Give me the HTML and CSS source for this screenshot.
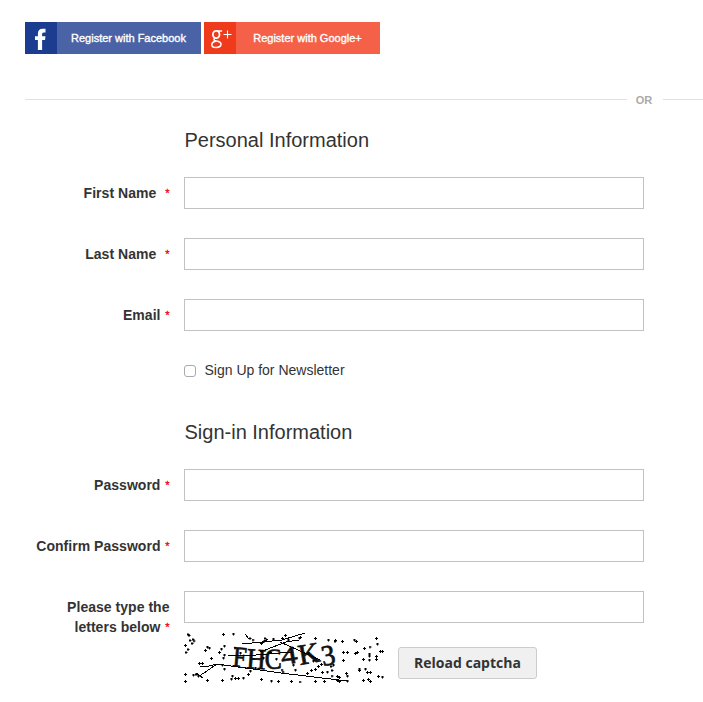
FILE: index.html
```html
<!DOCTYPE html>
<html lang="en">
<head>
<meta charset="utf-8">
<title>Create an Account</title>
<link rel="stylesheet" href="styles.css">
</head>
<body>
<main class="page">
  <div class="social">
    <a class="social-btn facebook">
      <span class="social-icon"><svg width="32" height="32" viewBox="0 0 32 32"><path d="M12.9 28V18.1H10V14.2h2.9v-2.4c0-3.5 1.7-5.1 4.7-5.1H20.5v3.7h-1.7c-1.4 0-1.7.7-1.7 1.9v1.9h3.4l-.5 3.9h-2.9V28z" fill="#fff"/></svg></span>
      <span class="social-label">Register with Facebook</span>
    </a>
    <a class="social-btn google">
      <span class="social-icon"><svg width="32" height="32" viewBox="0 0 32 32" fill="none" stroke="#fff"><ellipse cx="12.2" cy="12.5" rx="3.3" ry="3.7" stroke-width="1.8"/><path d="M13 8.9h5.1M11 16.2c-1.9 1.2-1.3 2.3 1.3 2.8 3.3.6 5.2 1.7 4.7 3.8-.5 1.900-2.4 2.7-4.9 2.7-2.7 0-4.3-1-4.3-2.8 0-1.900 1.7-3 3.8-3.4" stroke-width="1.5"/><path d="M19.5 12.500h8M23.500 8.500v8" stroke-width="1.1"/></svg></span>
      <span class="social-label">Register with Google+</span>
    </a>
  </div>
  <div class="divider"><span>OR</span></div>

  <form class="form">
    <h2>Personal Information</h2>
    <div class="row"><label class="wide" for="first">First Name <em>*</em></label><input class="field" id="first" type="text"></div>
    <div class="row"><label class="wide" for="last">Last Name <em>*</em></label><input class="field" id="last" type="text"></div>
    <div class="row"><label for="email">Email <em>*</em></label><input class="field" id="email" type="text"></div>
    <div class="check"><input id="news" type="checkbox"><label for="news">Sign Up for Newsletter</label></div>

    <h2>Sign-in Information</h2>
    <div class="row"><label for="pass">Password <em>*</em></label><input class="field" id="pass" type="password"></div>
    <div class="row"><label for="confirm">Confirm Password <em>*</em></label><input class="field" id="confirm" type="password"></div>
    <div class="row last">
      <label for="letters">Please type the<br>letters below <em>*</em></label>
      <div class="captcha-cell">
        <input class="field" id="letters" type="text">
        <div class="captcha">
          <svg width="200" height="50" viewBox="0 0 200 50">
            <defs><marker id="speck" markerUnits="userSpaceOnUse" markerWidth="4" markerHeight="4" refX="1.5" refY="1.5"><path d="M0 1h3v1H0zM1 0h1v3H1z"/></marker></defs>
            <g class="glyphs">
              <text transform="translate(48 33) rotate(5) scale(.86 1)">F</text>
              <text transform="translate(62 35) rotate(4) scale(.92 1)">H</text>
              <text transform="translate(81 36) rotate(-2) scale(.88 1)">C</text>
              <text transform="translate(98 32) rotate(-9) scale(1.15 .86)">4</text>
              <text transform="translate(116 32) rotate(-10) scale(1.02 1)">K</text>
              <text transform="translate(139 33) rotate(-10) scale(.95 1)">3</text>
            </g>
            <path class="scratch" d="M16 33h9l8-2 64 9 66 8M33 31 20 40l-5 3M12 40l7 5M58 11l40-4 23-7M44 22l16 1 48-4M76 19l26-10 13-2M96 9l18 8 22 10M61 1l4 5M78 10l6-4"/>
            <g class="specks">
              <polyline points="4,1.5 5,2.5 6,7.5 9,6.5 10,8 8,10.5 1.5,12.5 4,16.5 2,19.5 21.5,17.5 23.5,14 25.5,15 27.5,25.5 39.5,1.5 49.5,1 40.5,13 37.5,16 35.5,19.5 40.5,22 39.5,25 38.5,32 40.5,36 15.5,30.5 18.5,30.5 1.5,41.5 9.5,42 12,41.5 14.5,43 23.5,47.5 1.5,48.5 38.5,47.5 47.5,46 51.5,45.5 54.5,45.5 59.5,45 64.5,41.5 48.5,43"/>
              <polyline points="66,5.5 69,7 80.5,8 81,5.5 89.5,6 98.5,5.5 77.5,10.5 77.5,46.5 87.5,48 94.5,48.5 86.5,19.5 101.5,2.5 116.5,4.5 131.5,5.5 151.5,7.5 158.5,8.5 170.5,7 172.5,8.5 192.5,5.5 193.5,11 186,14 180.5,15.5 159.5,19.5 163.5,19.5 171.5,20.5 173.5,19.5 185.5,21 185.5,23 179.5,26.5 185.5,27 192.5,23.5 192.5,26.5 196.5,18.5 198.5,18.5"/>
              <polyline points="159.5,27.5 134.5,33.5 137.5,31.5 138.5,39.5 143.5,39 148,37.5 147,33.5 131.5,36.5 175.5,36 175.5,37.5 181.5,36 183.5,39.5 186.5,39.5 194.5,43.5 198.5,44 162.5,40.5 163.5,43 148,43 153.5,43.5 155.5,44.5 153.5,47.5 155.5,48.5 163.5,48 179.5,47.5 184.5,46.5 186.5,48.5 107.5,48.5 116,49 131.5,48.5 140.5,48.5 123.5,40.5 127.5,37.5"/>
              <polyline points="79.5,25 92.5,26 104.5,7 115.5,5 144.5,7 151,8.5 124.5,20 129.5,28 109.5,32 71.5,35 149.5,32 66.5,38 56.5,20 51,15 98,37 99,39 111.5,37"/>
            </g>
          </svg>
          <button type="button">Reload captcha</button>
        </div>
      </div>
    </div>
  </form>
</main>
</body>
</html>
```
FILE: styles.css
```css
* { box-sizing: border-box; }
body { margin: 0; background: #fff; color: #333; font: 14px/20px "Liberation Sans", Arial, sans-serif; overflow: hidden; }
.page { padding: 22px 0 0 25px; }
.social { display: flex; gap: 3px; }
.social-btn { display: flex; width: 176px; height: 32px; color: #fff; font-size: 11px; line-height: 32px; }
.social-icon { width: 32px; height: 32px; }
.social-icon svg, .captcha svg { display: block; }
.social-label { flex: 1; padding-right: 1px; text-align: center; -webkit-text-stroke: .35px #fff; white-space: nowrap; }
.facebook { background: #4a62a6; }
.facebook .social-icon { background: #1c3c8f; }
.google { background: #f56148; }
.google .social-icon { background: #f03a1c; }
.divider { display: flex; align-items: center; gap: 10px; height: 20px; margin-top: 36px; color: #aaa; font-size: 11px; font-weight: bold; line-height: 20px; }
.divider::before, .divider::after { content: ""; height: 1px; background: #e1e1e1; margin-bottom: 1px; }
.divider::before { width: 602px; }
.divider::after { flex: 1; }
.divider span { width: 16px; padding-right: 2px; display: flex; justify-content: center; }
.form { width: 619px; }
h2 { margin: 17px 0 24px 159.5px; font-size: 20px; font-weight: normal; line-height: 26px; }
.row { display: grid; grid-template-columns: 144.5px 460px; column-gap: 14.5px; margin-bottom: 29px; }
.row > label { padding-top: 6px; text-align: right; font-weight: bold; font-size: 14px; letter-spacing: .03px; white-space: nowrap; }
.row em { margin-left: .8px; color: #f00000; font-style: normal; font-size: 11px; font-weight: normal; -webkit-text-stroke: .3px #f00000; line-height: 1; vertical-align: 1px; }
.row .wide em { margin-left: 5px; }
.field { display: block; width: 460px; height: 32px; padding: 0 8px; border: 1px solid #c2c2c2; border-radius: 0; background: #fff; font: inherit; }
.check { display: flex; align-items: center; height: 20px; margin-left: 159px; }
.check input { appearance: none; width: 12px; height: 12px; margin: 2px 8.5px 0 0; border: 1px solid #aaa; border-radius: 3px; background: #fff; }
.check + h2 { margin-top: 39px; }
.last { margin-bottom: 0; }
.captcha { display: flex; gap: 14px; margin-top: 10px; }
.captcha button { width: 139px; height: 32px; margin-top: 14px; padding: 0; border: 1px solid #ccc; border-radius: 3px; background: #f0f0f0; color: #333; font: bold 14px/20px "Open Sans", sans-serif; }
.glyphs { font: 29px "Liberation Serif", serif; fill: #111; stroke: #111; stroke-width: .7; }
.scratch { fill: none; stroke: #000; stroke-width: 1; shape-rendering: crispEdges; }
.specks polyline { fill: none; stroke: none; marker: url(#speck); }
```
